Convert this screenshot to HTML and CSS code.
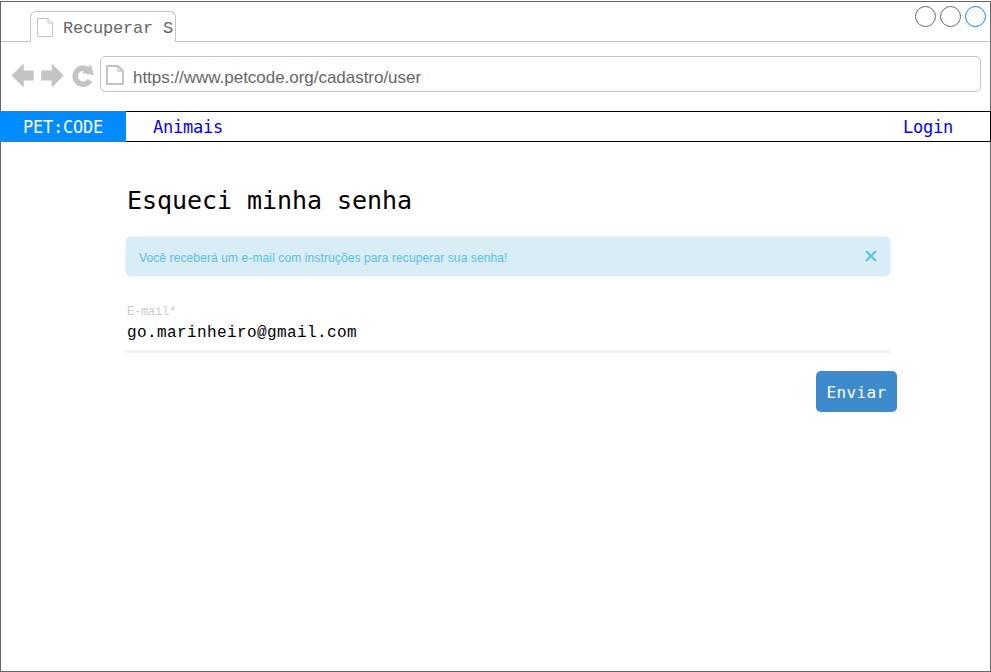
FILE: index.html
```html
<!DOCTYPE html>
<html lang="pt-BR">
<head>
<meta charset="utf-8">
<title>Recuperar Senha</title>
<link rel="stylesheet" href="styles.css">
</head>
<body>
<div class="window">
  <header class="tabs">
    <div class="tab">
      <svg class="tab-icon" width="18" height="20" viewBox="0 0 18 20"><path d="M1.500 1.500H12L16.500 6V19.500H1.500ZM12 1.500V6H16.500"/></svg>
      <span class="tab-title">Recuperar S</span>
    </div>
    <div class="controls"><span class="dot"></span><span class="dot"></span><span class="dot dot-active"></span></div>
  </header>
  <div class="toolbar">
    <svg class="controls-icons" width="84" height="26" viewBox="0 0 84 26">
      <path d="M.5 13.500 12.700 1.500V8.500H22.700V18.500H12.700V25.500Z"/>
      <path d="M52.700 13.500 40.700 1.500V8.500H30.200V18.500H40.700V25.500Z"/>
      <path class="reload" d="M79 18.300A8 8 0 1 1 77 7.800"/>
      <path d="M80 2.500 82.800 13.300 71 11Z"/>
    </svg>
    <div class="address">
      <svg class="page-icon" width="18" height="20" viewBox="0 0 18 20"><path d="M1 1H12L17 6V19H1Z"/><path class="fold" d="M12 1V6H17"/></svg>
      <span class="url">https://www.petcode.org/cadastro/user</span>
    </div>
  </div>
  <nav class="nav">
    <a class="brand">PET:CODE</a>
    <a class="link">Animais</a>
    <a class="link login">Login</a>
  </nav>
  <main class="content">
    <h1 class="title">Esqueci minha senha</h1>
    <div class="alert">
      <span class="message">Você receberá um e-mail com instruções para recuperar sua senha!</span>
      <svg class="close" width="12" height="12" viewBox="0 0 12 12"><path d="M1 1 11 11M11 1 1 11"/></svg>
    </div>
    <div class="field">
      <label class="label">E-mail*</label>
      <div class="value">go.marinheiro@gmail.com</div>
    </div>
    <button class="submit">Enviar</button>
  </main>
</div>
</body>
</html>
```

FILE: styles.css
```css
* { box-sizing: border-box; }
body { margin: 0; background: #fff; overflow: hidden; }
.window {
  width: 991px;
  height: 671px;
  margin-top: 1px;
  border: 1px solid #666;
  white-space: nowrap;
}
.tabs {
  display: flex;
  justify-content: space-between;
  height: 40px;
  border-bottom: 1px solid #c4c4c4;
}
.tab {
  display: flex;
  width: 146px;
  height: 31px;
  margin: 9px 0 0 29px;
  padding: 5px 0 0 5px;
  border: 1px solid #c4c4c4;
  border-bottom: 0;
  border-radius: 6px 6px 0 0;
  background: #fff;
}
.tab-icon { fill: none; stroke: #c4c4c4; stroke-width: 1; }
.tab-title {
  margin: 2px 0 0 9px;
  font: 17px/20px "Liberation Mono", monospace;
  letter-spacing: -0.2px;
  color: #666;
}
.controls { display: flex; gap: 4px; margin: 4px 4px 0 0; }
.dot { width: 21px; height: 21px; border: 1px solid #666; border-radius: 50%; }
.dot-active { border-color: #008cff; }
.toolbar { display: flex; align-items: flex-start; padding: 14px 9px 0 10px; height: 69px; }
.controls-icons { margin-top: 6px; fill: #c4c4c4; }
.reload { fill: none; stroke: #c4c4c4; stroke-width: 5.5; }
.address {
  display: flex;
  flex: 1;
  height: 36px;
  margin-left: 5px;
  padding: 7px 0 0 5px;
  border: 1px solid #c4c4c4;
  border-radius: 5px;
}
.page-icon { margin-top: 0.5px; fill: none; stroke: #c4c4c4; stroke-width: 2; }
.fold { stroke-width: 1.3; }
.url {
  margin-left: 9px;
  padding-top: 4px;
  font: 17px/20px "Liberation Sans", sans-serif;
  letter-spacing: -0.03px;
  color: #666;
}
.nav {
  display: flex;
  height: 31px;
  margin: 0 -1px;
  border: 1px solid #000;
  border-left: 0;
  font: 17px/30px "DejaVu Sans Mono", monospace;
  letter-spacing: -0.23px;
}
.brand { width: 126px; height: 31px; margin-top: -1px; padding: 1px 0 0 23px; background: #008cff; color: #fff; }
.link { margin-left: 27px; color: #00f; }
.login { margin: 0 37px 0 auto; }
.content { display: flex; flex-direction: column; width: 771px; margin-left: 125px; }
.title {
  margin: 44px 0 0 1px;
  font: 25px/30px "DejaVu Sans Mono", monospace;
  letter-spacing: -0.05px;
  color: #000;
}
.alert {
  display: flex;
  align-items: center;
  justify-content: space-between;
  width: 766px;
  height: 41px;
  margin: 20px 0 0 -1px;
  padding: 0 13px;
  border: 1px solid #ecf6fb;
  border-radius: 6px;
  background: #d9edf7;
}
.message { padding-top: 3px; font: 12px/16px "Liberation Sans", sans-serif; letter-spacing: 0.11px; color: #5bc0de; }
.close { margin: -1px 0.5px 0 0; fill: none; stroke: #5bc0de; stroke-width: 2; }
.field {
  width: 765px;
  height: 52px;
  margin: 24px 0 0 -1px;
  padding: 2px 0 0 2px;
  border-bottom: 3px solid #f2f2f2;
  font-family: "Liberation Mono", monospace;
}
.label { display: block; font-size: 12px; line-height: 18px; letter-spacing: -0.2px; color: #ccc; }
.value { font-size: 16px; line-height: 24px; letter-spacing: 0.4px; color: #000; }
.submit {
  align-self: flex-end;
  width: 81px;
  height: 41px;
  margin: 18px 0 0;
  padding: 2px 0 0;
  border: 0;
  border-radius: 5px;
  background: #3d8bcd;
  font: 16px/20px "DejaVu Sans Mono", monospace;
  letter-spacing: 0.37px;
  color: #fff;
}
```
